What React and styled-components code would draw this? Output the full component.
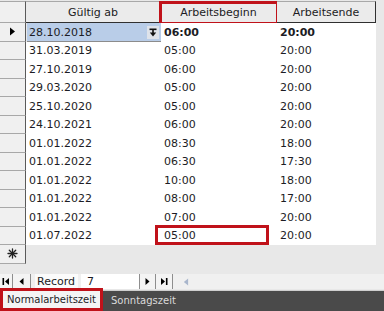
import React from 'react';
import styled, { createGlobalStyle } from 'styled-components';

const Global = createGlobalStyle`
  html, body { margin: 0; padding: 0; background: #e8e8e8; }
  body { font-family: "DejaVu Sans", Verdana, sans-serif; }
`;

const COLS = '26px 135px 116px 99px';
const RED = '#c0121a';

const Frame = styled.div`
  width: 384px;
  height: 311px;
  background: #e8e8e8;
  display: flex;
  flex-direction: column;
  overflow: hidden;
  font-family: "DejaVu Sans", Verdana, sans-serif;
  font-size: 11px;
  color: #1c1c24;
`;

const Sheet = styled.div`
  padding-top: 1px;
  flex: 1;
  display: flex;
  flex-direction: column;
`;

const HeaderRow = styled.div`
  display: grid;
  grid-template-columns: ${COLS};
  width: 376px;
  height: 22px;
`;

const Corner = styled.div`
  background: #f0f0f0;
  border-top: 1px solid #a8a8a8;
  border-bottom: 1px solid #a8a8a8;
  border-right: 1px solid #5a5a5a;
  box-sizing: border-box;
`;

const HeadCell = styled.div`
  position: relative;
  background: #ebebeb;
  border-top: 1px solid #a8a8a8;
  border-bottom: 1px solid #303030;
  border-right: 1px solid ${p => (p.$last ? '#303030' : '#a8a8a8')};
  box-sizing: border-box;
  display: flex;
  align-items: center;
  justify-content: center;
  line-height: 1;
`;

const Row = styled.div`
  display: grid;
  grid-template-columns: ${COLS};
  width: 376px;
  height: 18.5px;
`;

const Selector = styled.div`
  background: #f0f0f0;
  border-bottom: 1px solid #a8a8a8;
  border-right: 1px solid #5a5a5a;
  box-sizing: border-box;
  display: flex;
  align-items: center;
  justify-content: center;
`;

const Cell = styled.div`
  position: relative;
  background: ${p => (p.$blank ? 'transparent' : '#ffffff')};
  padding-left: 3px;
  display: flex;
  align-items: center;
  font-weight: ${p => (p.$bold ? 'bold' : 'normal')};
  white-space: nowrap;
`;

const SelectedCell = styled(Cell)`
  background: #b9cde8;
  padding-left: 2px;
  margin-left: 1px;
  box-shadow: inset 0 -1px 0 #8c8c8c;
  justify-content: space-between;
`;

const DropButton = styled.div`
  width: 12px;
  height: 13px;
  margin-right: 2px;
  background: #dfe3ea;
  display: flex;
  align-items: center;
  justify-content: center;
`;

const Mark = styled.div`
  position: absolute;
  border: 3px solid ${RED};
  box-sizing: border-box;
  pointer-events: none;
  left: ${p => p.$l}px;
  top: ${p => p.$t}px;
  width: ${p => p.$w}px;
  height: ${p => p.$h}px;
`;

const NavBar = styled.div`
  margin-top: auto;
  margin-bottom: 1px;
  height: 15px;
  display: flex;
  align-items: stretch;
  background: #f0f0f0;
`;

const NavBtn = styled.div`
  width: ${p => p.$w}px;
  box-sizing: border-box;
  border-right: 1px solid #8e8e8e;
  border-left: ${p => (p.$boxed ? '1px solid #8e8e8e' : 'none')};
  display: flex;
  align-items: center;
  justify-content: center;
  background: #f4f4f4;
`;

const NavLabel = styled.div`
  background: #fbfbfb;
  margin-left: 4px;
  padding: 0 3px 0 2px;
  display: flex;
  align-items: center;
`;

const RecordBox = styled.div`
  width: 52px;
  margin-left: 3px;
  background: #ffffff;
  padding-left: 6px;
  display: flex;
  align-items: center;
`;

const HScroll = styled.div`
  flex: 1;
  display: flex;
  align-items: center;
  padding-left: 10px;
  background: #f0f0f0;
`;

const TabBar = styled.div`
  height: 20px;
  border-top: 1px solid #cfcfcf;
  background: #4a4a4a;
  display: flex;
  align-items: flex-start;
  font-size: 10px;
`;

const Tab = styled.div`
  height: 17px;
  display: flex;
  align-items: center;
  justify-content: center;
  ${p =>
    p.$active
      ? `
    width: 97px;
    margin-left: 3px;
    background: #f4f4f4;
    color: #1c1c24;
    outline: 3px solid ${RED};
  `
      : `
    margin-left: 11px;
    color: #dadada;
    height: 19px;
  `}
`;

const Tri = ({ dir = 'right', color = '#000', size = 7 }) => (
  <svg width={size} height={size + 2} viewBox="0 0 7 9">
    {dir === 'right' ? (
      <polygon points="1,0.5 6,4.5 1,8.5" fill={color} />
    ) : (
      <polygon points="6,0.5 1,4.5 6,8.5" fill={color} />
    )}
  </svg>
);

const FirstIcon = () => (
  <svg width="8" height="9" viewBox="0 0 8 9">
    <rect x="0.5" y="1" width="1.6" height="7" fill="#000" />
    <polygon points="7,1 3,4.5 7,8" fill="#000" />
  </svg>
);
const PrevIcon = () => (
  <svg width="5" height="9" viewBox="0 0 5 9">
    <polygon points="4.5,1 0.5,4.5 4.5,8" fill="#000" />
  </svg>
);
const NextIcon = () => (
  <svg width="5" height="9" viewBox="0 0 5 9">
    <polygon points="0.5,1 4.5,4.5 0.5,8" fill="#000" />
  </svg>
);
const LastIcon = () => (
  <svg width="8" height="9" viewBox="0 0 8 9">
    <polygon points="1,1 5,4.5 1,8" fill="#000" />
    <rect x="5.9" y="1" width="1.6" height="7" fill="#000" />
  </svg>
);

const DropIcon = () => (
  <svg width="8" height="9" viewBox="0 0 8 9">
    <rect x="0.5" y="0.5" width="7" height="1.6" fill="#111" />
    <rect x="3.2" y="2" width="1.6" height="3.5" fill="#111" />
    <polygon points="0.8,4.5 7.2,4.5 4,8.5" fill="#111" />
  </svg>
);

const StarIcon = () => (
  <svg width="11" height="11" viewBox="0 0 11 11">
    <g stroke="#222" strokeWidth="1.3" strokeLinecap="round">
      <line x1="5.5" y1="1" x2="5.5" y2="10" />
      <line x1="1" y1="5.5" x2="10" y2="5.5" />
      <line x1="2.3" y1="2.3" x2="8.7" y2="8.7" />
      <line x1="8.7" y1="2.3" x2="2.3" y2="8.7" />
    </g>
  </svg>
);

const rows = [
  ['28.10.2018', '06:00', '20:00'],
  ['31.03.2019', '05:00', '20:00'],
  ['27.10.2019', '06:00', '20:00'],
  ['29.03.2020', '05:00', '20:00'],
  ['25.10.2020', '05:00', '20:00'],
  ['24.10.2021', '06:00', '20:00'],
  ['01.01.2022', '08:30', '18:00'],
  ['01.01.2022', '06:30', '17:30'],
  ['01.01.2022', '10:00', '18:00'],
  ['01.01.2022', '08:00', '17:00'],
  ['01.01.2022', '07:00', '20:00'],
  ['01.07.2022', '05:00', '20:00'],
];

export default function App() {
  return (
    <Frame>
      <Global />
      <Sheet>
        <HeaderRow>
          <Corner />
          <HeadCell>Gültig ab</HeadCell>
          <HeadCell>
            Arbeitsbeginn
            <Mark $l={-2} $t={-1} $w={120} $h={24} />
          </HeadCell>
          <HeadCell $last>Arbeitsende</HeadCell>
        </HeaderRow>
        {rows.map((r, i) => {
          const first = i === 0;
          const last = i === rows.length - 1;
          return (
            <Row key={i}>
              <Selector>{first && <Tri />}</Selector>
              {first ? (
                <SelectedCell>
                  {r[0]}
                  <DropButton>
                    <DropIcon />
                  </DropButton>
                </SelectedCell>
              ) : (
                <Cell>{r[0]}</Cell>
              )}
              <Cell $bold={first}>
                {r[1]}
                {last && <Mark $l={-6} $t={-2} $w={114} $h={20} />}
              </Cell>
              <Cell $bold={first}>{r[2]}</Cell>
            </Row>
          );
        })}
        <Row>
          <Selector>
            <StarIcon />
          </Selector>
          <Cell $blank />
          <Cell $blank />
          <Cell $blank />
        </Row>
        <NavBar>
          <NavBtn $w={13}>
            <FirstIcon />
          </NavBtn>
          <NavBtn $w={18}>
            <PrevIcon />
          </NavBtn>
          <NavLabel>Record</NavLabel>
          <RecordBox>7</RecordBox>
          <NavBtn $w={17} $boxed>
            <NextIcon />
          </NavBtn>
          <NavBtn $w={17}>
            <LastIcon />
          </NavBtn>
          <HScroll>
            <Tri dir="left" color="#a9b6cc" size={6} />
          </HScroll>
        </NavBar>
      </Sheet>
      <TabBar>
        <Tab $active>Normalarbeitszeit</Tab>
        <Tab>Sonntagszeit</Tab>
      </TabBar>
    </Frame>
  );
}
